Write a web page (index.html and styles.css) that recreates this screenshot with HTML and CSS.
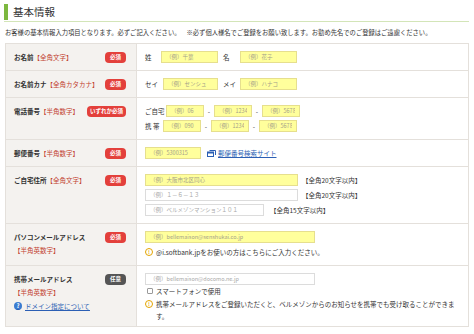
FILE: index.html
```html
<!DOCTYPE html>
<html lang="ja">
<head>
    <meta charset="UTF-8">
    <meta name="viewport" content="width=device-width, initial-scale=1.0">
    <title>基本情報</title>
    <link rel="stylesheet" href="styles.css">
</head>
<body>
    <div class="page">
        <div class="heading-wrap">
            <h2 class="heading">基本情報</h2>
        </div>
        <p class="intro">お客様の基本情報入力項目となります。必ずご記入ください。<span class="intro-note">※必ず個人様名でご登録をお願い致します。お勤め先名でのご登録はご遠慮ください。</span></p>

        <table class="form-table">
            <tr>
                <th>
                    <div class="lbl">
                        <div><b>お名前</b><span class="note">【全角文字】</span></div>
                        <span class="badge">必須</span>
                    </div>
                </th>
                <td>
                    <div class="row">
                        <span class="sub sub-name">姓</span>
                        <input class="field req w-name" placeholder="（例）千葉">
                        <span class="sub sub-name sub-gap">名</span>
                        <input class="field req w-name" placeholder="（例）花子">
                    </div>
                </td>
            </tr>
            <tr>
                <th>
                    <div class="lbl">
                        <div><b>お名前カナ</b><span class="note">【全角カタカナ】</span></div>
                        <span class="badge">必須</span>
                    </div>
                </th>
                <td>
                    <div class="row">
                        <span class="sub sub-kana">セイ</span>
                        <input class="field req w-kana" placeholder="（例）センシュ">
                        <span class="sub sub-name sub-gap">メイ</span>
                        <input class="field req w-name" placeholder="（例）ハナコ">
                    </div>
                </td>
            </tr>
            <tr>
                <th>
                    <div class="lbl">
                        <div><b>電話番号</b><span class="note">【半角数字】</span></div>
                        <span class="badge badge-wide">いずれか必須</span>
                    </div>
                </th>
                <td>
                    <div class="stack">
                        <div class="row">
                            <span class="sub sub-tel">ご自宅</span>
                            <input class="field req w-tel" placeholder="（例）06">
                            <span class="dash">-</span>
                            <input class="field req w-tel" placeholder="（例）1234">
                            <span class="dash">-</span>
                            <input class="field req w-tel" placeholder="（例）5678">
                        </div>
                        <div class="row">
                            <span class="sub sub-mob">携 帯</span>
                            <input class="field req w-tel" placeholder="（例）090">
                            <span class="dash">-</span>
                            <input class="field req w-tel" placeholder="（例）1234">
                            <span class="dash">-</span>
                            <input class="field req w-tel" placeholder="（例）5678">
                        </div>
                    </div>
                </td>
            </tr>
            <tr>
                <th>
                    <div class="lbl">
                        <div><b>郵便番号</b><span class="note">【半角数字】</span></div>
                        <span class="badge">必須</span>
                    </div>
                </th>
                <td>
                    <div class="row">
                        <input class="field req w-zip" placeholder="（例）5300315">
                        <a class="ext-link" href="#">
                            <svg class="win-icon" width="9" height="7" viewBox="0 0 9 7">
                                <path d="M2.5 0.5h6v4.5" fill="none" stroke="#2c5fb4" stroke-width="1"/>
                                <rect x="0.5" y="2" width="6" height="4.5" fill="#fff" stroke="#2c5fb4" stroke-width="1"/>
                                <rect x="0.5" y="2" width="6" height="1.5" fill="#2c5fb4"/>
                            </svg>
                            <span>郵便番号検索サイト</span>
                        </a>
                    </div>
                </td>
            </tr>
            <tr>
                <th>
                    <div class="lbl">
                        <div><b>ご自宅住所</b><span class="note">【全角文字】</span></div>
                        <span class="badge">必須</span>
                    </div>
                </th>
                <td>
                    <div class="stack">
                        <div class="row">
                            <input class="field req w-addr" placeholder="（例）大阪市北区同心">
                            <span class="limit">【全角20文字以内】</span>
                        </div>
                        <div class="row">
                            <input class="field w-addr" placeholder="（例）１－６－１３">
                            <span class="limit">【全角20文字以内】</span>
                        </div>
                        <div class="row">
                            <input class="field w-addr-s" placeholder="（例）ベルメゾンマンション１０１">
                            <span class="limit limit-s">【全角15文字以内】</span>
                        </div>
                    </div>
                </td>
            </tr>
            <tr>
                <th>
                    <div class="lbl">
                        <div>
                            <b>パソコンメールアドレス</b><br>
                            <span class="note">【半角英数字】</span>
                        </div>
                        <span class="badge">必須</span>
                    </div>
                </th>
                <td>
                    <div class="stack">
                        <input class="field req w-mail" placeholder="（例）bellemaison@senshukai.co.jp">
                        <div class="info">
                            <span class="info-icon">!</span>
                            <span>@i.softbank.jpをお使いの方はこちらにご入力ください。</span>
                        </div>
                    </div>
                </td>
            </tr>
            <tr>
                <th>
                    <div class="lbl">
                        <div>
                            <b>携帯メールアドレス</b><br>
                            <span class="note">【半角英数字】</span><br>
                            <a class="help" href="#"><span class="help-icon">?</span><span class="help-text">ドメイン指定について</span></a>
                        </div>
                        <span class="badge badge-any">任意</span>
                    </div>
                </th>
                <td class="cell-last">
                    <input class="field w-mail" placeholder="（例）bellemaison@docomo.ne.jp">
                    <label class="check">
                        <span class="check-box"></span>
                        <span>スマートフォンで使用</span>
                    </label>
                    <div class="info info-long">
                        <span class="info-icon">!</span>
                        <span class="info-text">携帯メールアドレスをご登録いただくと、ベルメゾンからのお知らせを携帯でも受け取ることができます。</span>
                    </div>
                </td>
            </tr>
        </table>
    </div>
</body>
</html>
```

FILE: styles.css
```css
body {
    margin: 0;
    background: #fff;
    color: #333;
    font-family: "Noto Sans CJK JP", "Noto Sans", sans-serif;
    font-size: 6.5px;
}
.page {
    width: 464px;
    padding: 4px 5px 0 5px;
}
.heading-wrap {
    border-bottom: 1px solid #d3e5b8;
    padding-bottom: 1px;
    margin-left: -1px;
}
.heading {
    margin: 0;
    border-left: 4px solid #7db83f;
    padding-left: 5px;
    font-size: 10.5px;
    font-weight: normal;
    line-height: 16px;
    color: #333;
}
.intro {
    margin: 5px 0 4px;
    font-size: 6.3px;
    line-height: 12px;
    white-space: nowrap;
}
.intro-note {
    margin-left: 6px;
}
.form-table {
    width: 100%;
    border-collapse: collapse;
    border: 1px solid #dedad5;
}
.form-table th {
    width: 112px;
    padding: 7px 10px 6px 8px;
    background: #f4f2ef;
    border: 1px solid #e4e0db;
    text-align: left;
    vertical-align: top;
    font-weight: normal;
}
.form-table td {
    padding: 7px 8px;
    border: 1px solid #e4e0db;
    vertical-align: top;
}
.form-table td.cell-last {
    padding-bottom: 4px;
}
.lbl {
    display: flex;
    justify-content: space-between;
    align-items: flex-start;
    line-height: 13px;
}
.lbl b {
    font-weight: bold;
    color: #333;
}
.note {
    color: #c2412f;
}
.badge {
    margin-top: 1px;
    padding: 0 5px;
    border-radius: 4px;
    background: #e3403b;
    color: #fff;
    font-size: 5.5px;
    font-weight: bold;
    line-height: 11px;
    white-space: nowrap;
}
.badge-wide {
    padding: 0 3px;
}
.badge-any {
    background: #555;
}
.row {
    display: flex;
    align-items: center;
    height: 12px;
}
.stack {
    display: flex;
    flex-direction: column;
    gap: 3px;
}
.sub {
    line-height: 12px;
}
.sub-name {
    width: 16px;
}
.sub-kana {
    width: 18px;
}
.sub-gap {
    margin-left: 5px;
    width: 17px;
}
.sub-tel {
    width: 21px;
}
.sub-mob {
    width: 18px;
}
.dash {
    width: 10px;
    text-align: center;
}
.field {
    box-sizing: border-box;
    height: 12px;
    margin: 0;
    padding: 0 4px;
    border: 1px solid #dcdcdc;
    border-radius: 0;
    background: #fff;
    color: #333;
    font-family: "Noto Sans CJK JP", "Noto Sans", sans-serif;
    font-size: 5.5px;
    outline: none;
}
.field::placeholder {
    color: #a8a8a8;
}
.field.req {
    background: #ffff9c;
    border-color: #e6df8e;
}
.field.req::placeholder {
    color: #a5a28a;
}
.w-name {
    width: 57px;
}
.w-kana {
    width: 55px;
}
.w-tel {
    width: 38px;
}
.w-zip {
    width: 56px;
}
.w-addr {
    width: 153px;
}
.w-addr-s {
    width: 119px;
}
.w-mail {
    width: 170px;
    display: block;
}
.ext-link {
    display: flex;
    align-items: center;
    margin-left: 6px;
    color: #2c5fb4;
}
.win-icon {
    margin-right: 2px;
}
.limit {
    margin-left: 4px;
}
.limit-s {
    margin-left: 6px;
}
.info {
    display: flex;
    align-items: flex-start;
    line-height: 12px;
}
.info-icon {
    box-sizing: border-box;
    flex: none;
    width: 8px;
    height: 8px;
    margin: 2px 3px 0 0;
    border: 1px solid #e4a400;
    border-radius: 50%;
    color: #e4a400;
    font-size: 5px;
    font-weight: bold;
    line-height: 6px;
    text-align: center;
}
.info-text {
    max-width: 300px;
}
.info-long {
    margin-top: 1px;
}
.check {
    display: flex;
    align-items: center;
    height: 12px;
}
.check-box {
    box-sizing: border-box;
    width: 6px;
    height: 6px;
    margin: 0 3px 0 2px;
    border: 1px solid #9a9a9a;
    border-radius: 1px;
    background: #fff;
}
.help {
    display: inline-flex;
    align-items: center;
    color: #2c5fb4;
}
.help-icon {
    width: 8px;
    height: 8px;
    margin-right: 3px;
    border-radius: 50%;
    background: #3a7bd0;
    color: #fff;
    font-size: 6px;
    font-weight: bold;
    line-height: 8px;
    text-align: center;
}
.help-text {
    text-decoration: underline;
}
```
